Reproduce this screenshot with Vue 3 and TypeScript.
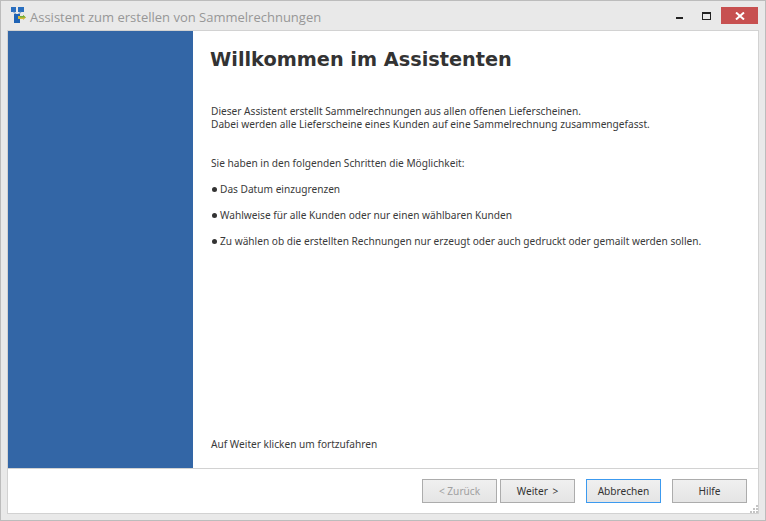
<script setup lang="ts">
const bullets = [
  'Das Datum einzugrenzen',
  'Wahlweise für alle Kunden oder nur einen wählbaren Kunden',
  'Zu wählen ob die erstellten Rechnungen nur erzeugt oder auch gedruckt oder gemailt werden sollen.',
]
</script>

<template>
  <div class="window">
    <header class="titlebar">
      <svg class="app-icon" width="16" height="17" viewBox="0 0 16 17" aria-hidden="true">
        <rect x="0" y="0" width="5" height="5" fill="#2a6fc0" />
        <rect x="7" y="0" width="6" height="5" fill="#2a6fc0" />
        <path d="M2.5 5 L5 7 M10 5 L7.5 7" stroke="#8aa6c8" stroke-width="1.2" fill="none" />
        <rect x="3" y="7" width="6" height="9" fill="#1f63b5" />
        <path d="M7 9 h5 v-1 l3 2.5 l-3 2.5 v-1 h-5 z" fill="#d8b93a" />
        <path d="M9 9 h3 v-1 l3 2.5 h-6 z" fill="#6fae3a" />
      </svg>
      <span class="title">Assistent zum erstellen von Sammelrechnungen</span>
      <div class="controls">
        <span class="ctl ctl-min"></span>
        <span class="ctl ctl-max"></span>
        <span class="ctl-close">
          <svg width="10" height="8" viewBox="0 0 10 8" aria-hidden="true">
            <path d="M1 0.5 L9 7.5 M9 0.5 L1 7.5" stroke="#fff" stroke-width="2" fill="none" />
          </svg>
        </span>
      </div>
    </header>

    <div class="client">
      <div class="main">
        <aside class="sidebar"></aside>
        <section class="content">
          <h1>Willkommen im Assistenten</h1>
          <p class="intro">
            Dieser Assistent erstellt Sammelrechnungen aus allen offenen Lieferscheinen.<br />
            Dabei werden alle Lieferscheine eines Kunden auf eine Sammelrechnung zusammengefasst.
          </p>
          <p class="lead">Sie haben in den folgenden Schritten die Möglichkeit:</p>
          <ul>
            <li v-for="b in bullets" :key="b"><span class="dot"></span>{{ b }}</li>
          </ul>
          <p class="hint">Auf Weiter klicken um fortzufahren</p>
        </section>
      </div>
      <footer class="buttons">
        <button class="btn" disabled>&lt; Zurück</button>
        <button class="btn next">Weiter &gt;</button>
        <button class="btn focus">Abbrechen</button>
        <button class="btn">Hilfe</button>
        <svg class="grip" width="8" height="8" viewBox="0 0 8 8" aria-hidden="true">
          <path d="M6 0h2v2H6zM3 3h2v2H3zM6 3h2v2H6zM0 6h2v2H0zM3 6h2v2H3zM6 6h2v2H6z" fill="#c4c4c4" />
        </svg>
      </footer>
    </div>
  </div>
</template>

<style>
html, body {
  margin: 0;
  background: #e9e9e9;
}
</style>

<style scoped>
.window {
  box-sizing: border-box;
  width: 766px;
  height: 521px;
  border: 1px solid #bcbcbc;
  background: #e9e9e9;
  padding: 0 6px 6px 6px;
  display: flex;
  flex-direction: column;
  font-family: "Noto Sans", "Liberation Sans", sans-serif;
  color: #333;
}

.titlebar {
  height: 29px;
  flex: none;
  display: flex;
  align-items: center;
}

.app-icon {
  align-self: flex-start;
  margin: 6px 0 0 4px;
}

.title {
  margin: 2px 0 0 3px;
  font-size: 13px;
  color: #979797;
  font-family: "Open Sans", sans-serif;
}

.controls {
  margin-left: auto;
  display: flex;
  align-items: flex-start;
  align-self: flex-start;
  padding-top: 6px;
}

.ctl {
  display: block;
  box-sizing: border-box;
}

.ctl-min {
  width: 7px;
  height: 2px;
  background: #222;
  margin: 10px 19px 0 0;
}

.ctl-max {
  width: 9px;
  height: 8px;
  border: 1px solid #222;
  border-top-width: 2px;
  margin: 5px 10px 0 0;
}

.ctl-close {
  width: 37px;
  height: 17px;
  margin-right: 1px;
  background: #c75050;
  display: flex;
  align-items: center;
  justify-content: center;
}

.client {
  flex: 1;
  border: 1px solid #d2d2d2;
  background: #fff;
  display: flex;
  flex-direction: column;
  min-height: 0;
}

.main {
  flex: 1;
  display: flex;
  min-height: 0;
}

.sidebar {
  width: 185px;
  background: #3366a6;
  flex: none;
}

.content {
  flex: 1;
  padding: 0 0 0 17px;
  display: flex;
  flex-direction: column;
  font-size: 10.14px;
  color: #3a3a3a;
  line-height: 13px;
}

h1 {
  margin: 17px 0 0 0;
  font: bold 19.3px/24px "DejaVu Sans", sans-serif;
  color: #333;
}

.intro {
  margin: 33px 0 0 1px;
}

.lead {
  margin: 26px 0 0 1px;
}

ul {
  list-style: none;
  margin: 0;
  padding: 0 0 0 2px;
}

li {
  margin-top: 13px;
  display: flex;
  align-items: center;
}

.dot {
  width: 5px;
  height: 5px;
  border-radius: 50%;
  background: #333;
  margin-right: 3px;
}

.hint {
  margin: auto 0 17px 1px;
}

.buttons {
  position: relative;
  height: 45px;
  flex: none;
  box-sizing: border-box;
  border-top: 1px solid #d2d2d2;
  display: flex;
  align-items: flex-start;
  padding: 10px 0 0 414px;
}

.btn {
  box-sizing: border-box;
  width: 75px;
  height: 24px;
  padding: 0;
  border: 1px solid #acacac;
  background: linear-gradient(#f0f0f0, #e5e5e5);
  font: 10.14px "Noto Sans", sans-serif;
  color: #333;
}

.btn + .btn {
  margin-left: 11px;
}

.btn.next {
  margin-left: 3px;
  word-spacing: 2px;
}

.btn:disabled {
  color: #a0a0a0;
}

.btn.focus {
  border-color: #3c9aef;
}

.grip {
  position: absolute;
  right: 0;
  bottom: 0;
}
</style>
